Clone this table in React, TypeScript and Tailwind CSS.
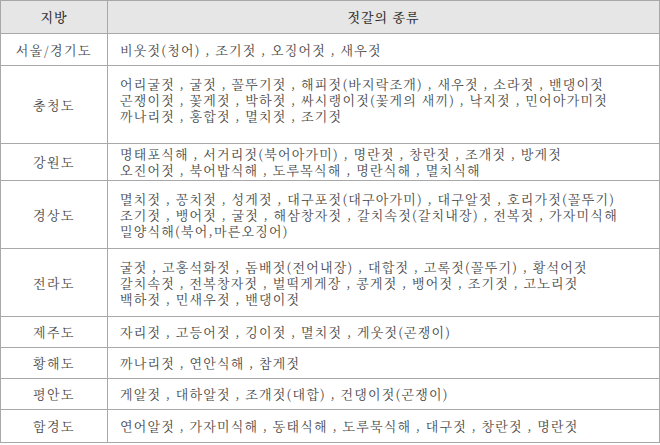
const rows: { region: string; h: string; lines: string[]; extra?: string }[] = [
  { region: '서울/경기도', h: 'h-[32px]', lines: ['비웃젓(청어) , 조기젓 , 오징어젓 , 새우젓'] },
  {
    region: '충청도',
    h: 'h-[78px]',
    extra: 'pb-[10px]',
    lines: [
      '어리굴젓 , 굴젓 , 꼴뚜기젓 , 해피젓(바지락조개) , 새우젓 , 소라젓 , 밴댕이젓',
      '곤쟁이젓 , 꽃게젓 , 박하젓 , 싸시랭이젓(꽃게의 새끼) , 낙지젓 , 민어아가미젓',
      '까나리젓 , 홍합젓 , 멸치젓 , 조기젓',
    ],
  },
  {
    region: '강원도',
    h: 'h-[37px]',
    lines: [
      '명태포식해 , 서거리젓(북어아가미) , 명란젓 , 창란젓 , 조개젓 , 방게젓',
      '오진어젓 , 북어밥식해 , 도루목식해 , 명란식해 , 멸치식해',
    ],
  },
  {
    region: '경상도',
    h: 'h-[68px]',
    lines: [
      '멸치젓 , 꽁치젓 , 성게젓 , 대구포젓(대구아가미) , 대구알젓 , 호리가젓(꼴뚜기)',
      '조기젓 , 뱅어젓 , 굴젓 , 해삼창자젓 , 갈치속젓(갈치내장) , 전복젓 , 가자미식해',
      '밀양식해(북어,마른오징어)',
    ],
  },
  {
    region: '전라도',
    h: 'h-[68px]',
    lines: [
      '굴젓 , 고홍석화젓 , 돔배젓(전어내장) , 대합젓 , 고록젓(꼴뚜기) , 황석어젓',
      '갈치속젓 , 전복창자젓 , 벌떡게게장 , 콩게젓 , 뱅어젓 , 조기젓 , 고노리젓',
      '백하젓 , 민새우젓 , 밴댕이젓',
    ],
  },
  { region: '제주도', h: 'h-[31px]', lines: ['자리젓 , 고등어젓 , 깅이젓 , 멸치젓 , 게웃젓(곤쟁이)'] },
  { region: '황해도', h: 'h-[31px]', lines: ['까나리젓 , 연안식해 , 참게젓'] },
  { region: '평안도', h: 'h-[31px]', lines: ['게알젓 , 대하알젓 , 조개젓(대합) , 건댕이젓(곤쟁이)'] },
  { region: '함경도', h: 'h-[33px]', lines: ['연어알젓 , 가자미식해 , 동태식해 , 도루묵식해 , 대구젓 , 창란젓 , 명란젓'] },
];

export default function App() {
  return (
    <div
      className="w-[660px] h-[445px] bg-white text-[13px] leading-[16px] text-[#474747]"
      style={{ fontFamily: '"Noto Serif CJK KR", "Noto Sans CJK KR", serif' }}
    >
      <div className="w-[660px] border border-[#a8a8a8]">
        {/* header */}
        <div className="flex h-[32px] bg-[#e6e6e6] text-[#2e2e2e] font-medium">
          <div className="w-[107px] shrink-0 border-r border-[#a8a8a8] flex items-center justify-center tracking-[1px]">
            지방
          </div>
          <div className="flex-1 flex items-center justify-center tracking-[1px]">젓갈의 종류</div>
        </div>
        {rows.map((r) => (
          <div key={r.region} className={`flex border-t border-[#a8a8a8] ${r.h}`}>
            <div className="w-[107px] shrink-0 border-r border-[#a8a8a8] flex items-center justify-center tracking-[1.5px]">
              {r.region}
            </div>
            <div className={`flex-1 flex flex-col justify-center pl-[12px] tracking-[1.2px] whitespace-nowrap ${r.extra ?? ''}`}>
              {r.lines.map((l, i) => (
                <div key={i}>{l}</div>
              ))}
            </div>
          </div>
        ))}
      </div>
    </div>
  );
}
